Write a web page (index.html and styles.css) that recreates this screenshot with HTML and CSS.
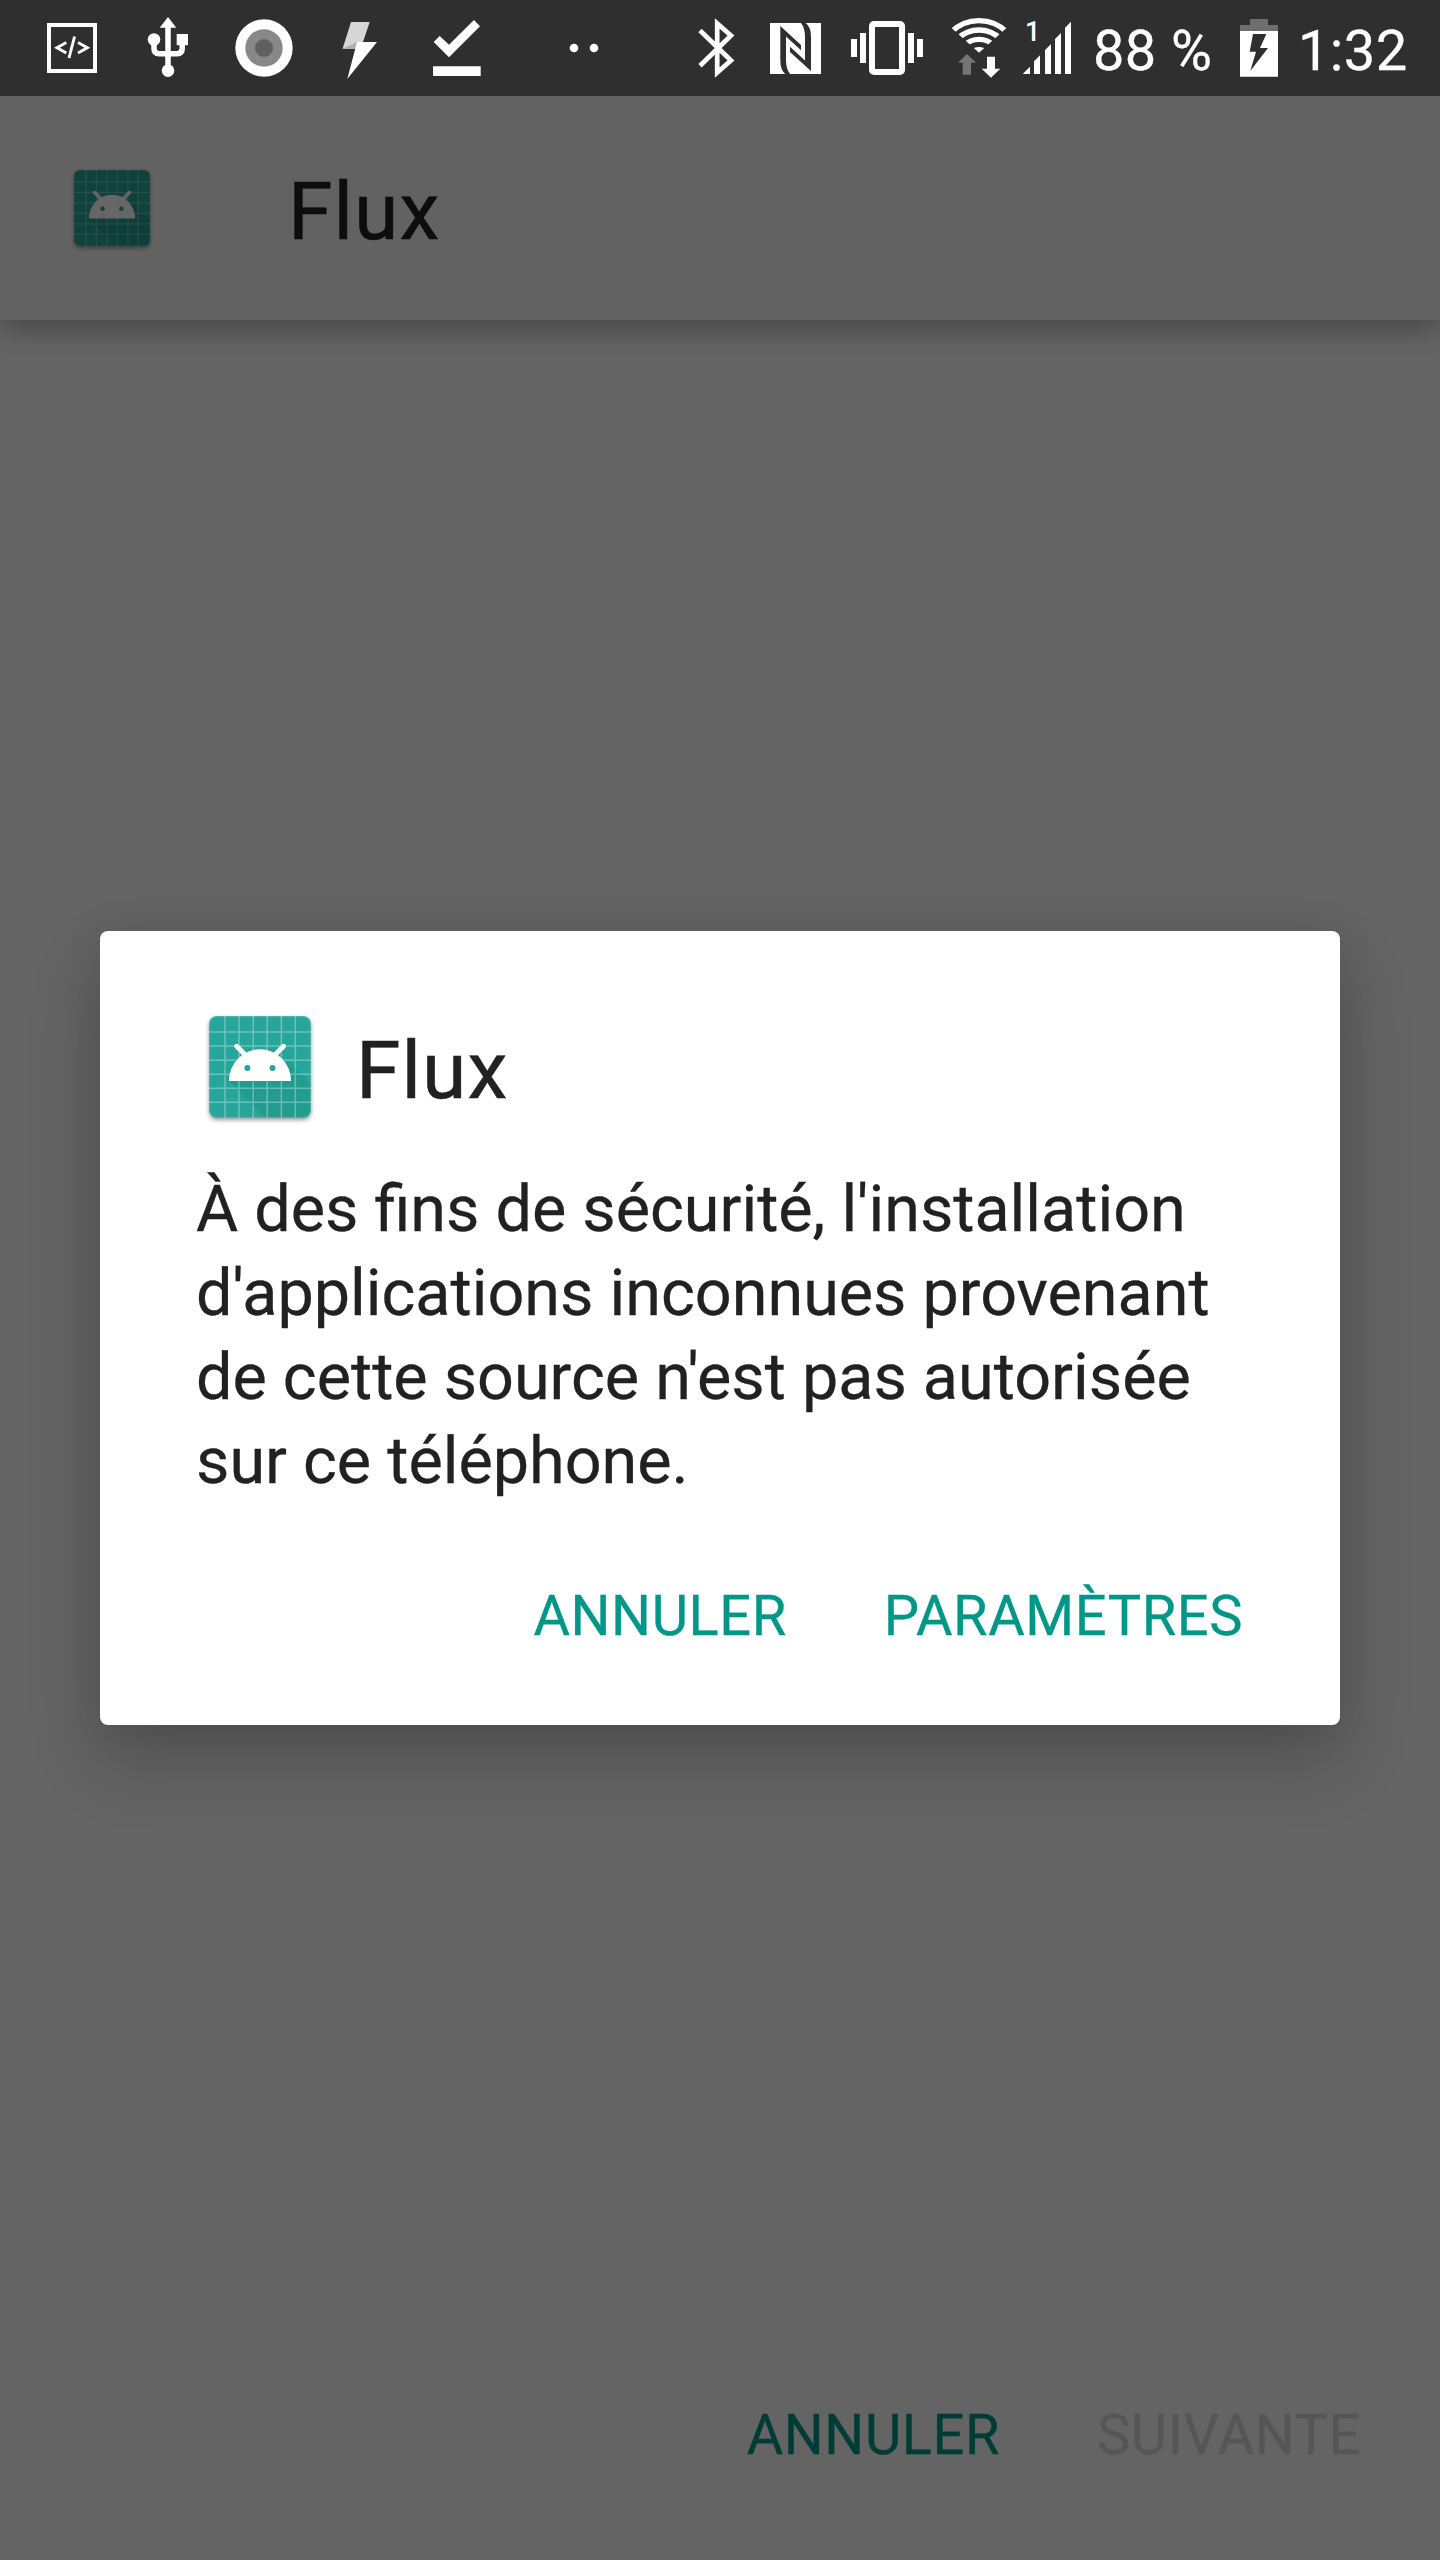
FILE: index.html
```html
<!DOCTYPE html>
<html lang="fr">
<head>
<meta charset="utf-8">
<title>Flux</title>
<link rel="stylesheet" href="styles.css">
</head>
<body>
<svg class="defs" aria-hidden="true">
  <symbol id="app-icon" viewBox="0 0 102 102">
    <rect width="102" height="102" rx="8" fill="#26a69a"/>
    <path d="M20 65l37 37h37a8 8 0 0 0 8-8V68L80 46z" fill="#000" opacity=".06"/>
    <path d="M16 0v102M30 0v102M44.2 0v102M58.2 0v102M72.3 0v102M86.3 0v102M0 16h102M0 30h102M0 44.2h102M0 58.2h102M0 72.3h102M0 86.3h102" stroke="#fff" stroke-opacity=".32" stroke-width="1.5"/>
    <rect x=".6" y=".6" width="100.8" height="100.8" rx="7.5" fill="none" stroke="#fff" stroke-opacity=".16" stroke-width="1.2"/>
    <path d="M27.7 30.3l8 8M74.5 30.3l-8 8" stroke="#fff" stroke-width="4.8" stroke-linecap="round"/>
    <path d="M20 65a31 31.7 0 0 1 62 0z" fill="#fff"/>
    <circle cx="38.4" cy="52" r="3" fill="#26a69a"/><circle cx="63.5" cy="52" r="3" fill="#26a69a"/>
  </symbol>
</svg>
<div class="screen">
  <div class="statusbar">
    <svg width="120" height="96" viewBox="0 0 120 96"><g fill="none" stroke="#fff"><rect x="49" y="25" width="46" height="46" stroke-width="4"/><path d="M66.3 42.6L57 47.7l9.3 5.2M78 42.6l9.3 5.1-9.3 5.2M69 58l5.6-21.5" stroke-width="2.9"/></g></svg>
    <svg width="96" height="96" viewBox="120 0 96 96"><g fill="#fff"><path d="M168 17l8.3 10.8h-16.6z"/><circle cx="154" cy="39.5" r="6.3"/><circle cx="168" cy="70.6" r="6.3"/><path d="M176.7 34h11.3v11.2h-11.3z"/></g><path d="M168 24v44M154 40v8.500q0 5.200 5.200 5.200h17.800q5.200 0 5.200-5.200V42" fill="none" stroke="#fff" stroke-width="5.500"/></svg>
    <svg width="108" height="96" viewBox="216 0 108 96"><circle cx="264" cy="48" r="28.700" fill="#fff"/><circle cx="264" cy="48" r="18.700" fill="#888"/><circle cx="264" cy="48" r="9" fill="#606060"/></svg>
    <svg width="84" height="96" viewBox="324 0 84 96"><path d="M351 22h18.700L363 42l-6 2-14.500 5z" fill="#d6d6d6"/><path d="M342.500 49l14.500-7v7z" fill="#b0b0b0"/><path d="M357 42h20l-29.700 37z" fill="#fff"/></svg>
    <svg width="108" height="96" viewBox="408 0 108 96"><path d="M433.700 42l6-6 9.300 8.700L474 20l6 6.300-31 31zM433 66.300h47.700v9.700H433z" fill="#fff"/></svg>
    <svg width="124" height="96" viewBox="516 0 124 96"><circle cx="574" cy="48" r="4.300" fill="#fff"/><circle cx="594" cy="48" r="4.300" fill="#fff"/></svg>
    <svg class="push" width="90" height="96" viewBox="660 0 90 96"><path d="M700 30.500l31 30-13.800 12v-49l13.800 12-31 30.200" fill="none" stroke="#fff" stroke-width="4.700"/></svg>
    <svg width="86" height="96" viewBox="750 0 86 96"><path d="M770 23h51v51h-51z" fill="#fff"/><path d="M780.300 26l20.700 19v5.300l-15-13.800V60q0 9 4 14h-4.700q-5-4-5-14zM811 71l-21-19v-5.300l15 13.800V37q0-9-4-14h4.700q5.300 4 5.300 14z" fill="#2f2f2f"/></svg>
    <svg width="102" height="96" viewBox="836 0 102 96"><rect x="872" y="24" width="30" height="48" rx="2" fill="none" stroke="#fff" stroke-width="6"/><path d="M860 33h6v30h-6zM851 39h6v18h-6zM908 33h6v30h-6zM917 39h6v18h-6z" fill="#fff"/></svg>
    <svg width="78" height="96" viewBox="938 0 78 96"><clipPath id="wifi-fan"><path d="M979 52.700L929 7.700h100z"/></clipPath><g clip-path="url(#wifi-fan)" fill="none" stroke="#fff" stroke-width="5.300"><circle cx="979" cy="60.300" r="39.700"/><circle cx="979" cy="60.300" r="30.300"/><circle cx="979" cy="60.300" r="21"/><circle cx="979" cy="60.300" r="13.300" fill="#fff" stroke="none"/></g><path d="M967 54l9 8.700h-5v12h-8.300v-12H958z" fill="#757575"/><path d="M987 56.700h8v12h5.300L991 77.700l-9.300-9h5.300z" fill="#fff"/></svg>
    <svg width="72" height="96" viewBox="1016 0 72 96"><text class="sim" x="1025" y="41">1</text><path d="M1022.700 74l7.300-7.300V74zM1034 74V61.300l6-6V74zM1045 74V50l6-6v30zM1055 74V39l6-6v41zM1065 74V27.700l6-6V74z" fill="#fff"/></svg>
    <span class="battery-level">88 %</span>
    <svg width="64" height="96" viewBox="1226 0 64 96"><path d="M1240 25h10v-6h18v6h10v6h-38z" fill="#6e6e6e"/><path d="M1240 31h38v45.700h-38z" fill="#fff"/><path d="M1253 34h13.300L1260 48h8l-17.700 23 5.700-19.300h-6.300z" fill="#2f2f2f"/></svg>
    <span class="clock">1:32</span>
  </div>
  <main class="activity">
    <header class="appbar">
      <svg class="app-icon small"><use href="#app-icon"/></svg>
      <h1 class="title">Flux</h1>
    </header>
    <footer class="footer">
      <button class="btn">ANNULER</button>
      <button class="btn disabled" disabled>SUIVANTE</button>
    </footer>
    <div class="scrim">
      <section class="dialog">
        <div class="dialog-head">
          <svg class="app-icon large"><use href="#app-icon"/></svg>
          <h2 class="title">Flux</h2>
        </div>
        <p class="message">À des fins de sécurité, l'installation<br>d'applications inconnues provenant<br>de cette source n'est pas autorisée<br>sur ce téléphone.</p>
        <div class="actions">
          <button class="btn">ANNULER</button>
          <button class="btn">PARAMÈTRES</button>
        </div>
      </section>
    </div>
  </main>
</div>
</body>
</html>
```
FILE: styles.css
```css
* { box-sizing: border-box; }
body { margin: 0; font-family: Roboto, sans-serif; color: #212121; }
.defs { position: absolute; width: 0; height: 0; }
.screen { width: 1440px; height: 2560px; display: flex; flex-direction: column; overflow: hidden; }
.statusbar { height: 96px; flex: none; display: flex; background: #2f2f2f; color: #fff; }
.statusbar svg { flex: none; display: block; }
.push { margin-left: 20px; }
.sim { font: 500 27px Roboto, sans-serif; fill: #fff; }
.battery-level, .clock { font-size: 56px; line-height: 102px; height: 96px; letter-spacing: .4px; white-space: nowrap; -webkit-text-stroke: .3px; }
.battery-level { width: 138px; padding-left: 5px; }
.clock { padding-left: 8px; }
.activity { position: relative; flex: 1; display: flex; flex-direction: column; justify-content: space-between; background: #fafafa; overflow: hidden; }
.appbar { height: 224px; padding: 0 74px; display: flex; align-items: center; background: #f5f5f5; box-shadow: 0 8px 28px rgba(0, 0, 0, .31); }
.app-icon { display: block; flex: none; filter: drop-shadow(0 2px 2px rgba(0, 0, 0, .4)); }
.small { width: 76px; height: 76px; }
.large { width: 102px; height: 102px; }
.title { margin: 0; padding-top: 8px; font-size: 80.5px; line-height: 88px; letter-spacing: 1px; font-weight: 400; -webkit-text-stroke: .5px; }
.appbar .title { margin-left: 138px; }
.footer { display: flex; justify-content: flex-end; gap: 97px; padding: 0 79px 85px 0; }
.btn { padding: 0; border: 0; background: none; font: 400 56px/80px Roboto, sans-serif; letter-spacing: .58px; color: #009688; -webkit-text-stroke: .3px; }
.disabled { color: #d7d7d7; }
.scrim { position: absolute; inset: 0; display: flex; flex-direction: column; align-items: center; padding-top: 835px; background: rgba(0, 0, 0, .6); }
.dialog { width: 1240px; height: 794px; padding: 85px 96px 0; border-radius: 8px; background: #fff; box-shadow: 0 36px 72px rgba(0, 0, 0, .2), 0 0 40px rgba(0, 0, 0, .08); }
.dialog-head { display: flex; align-items: center; gap: 45px; padding-left: 13px; }
.message { margin: 49px 0 0; font-size: 64.7px; line-height: 84px; white-space: nowrap; -webkit-text-stroke: .3px; }
.actions { display: flex; justify-content: flex-end; gap: 97px; margin: 73px 1px 0 0; }
```
